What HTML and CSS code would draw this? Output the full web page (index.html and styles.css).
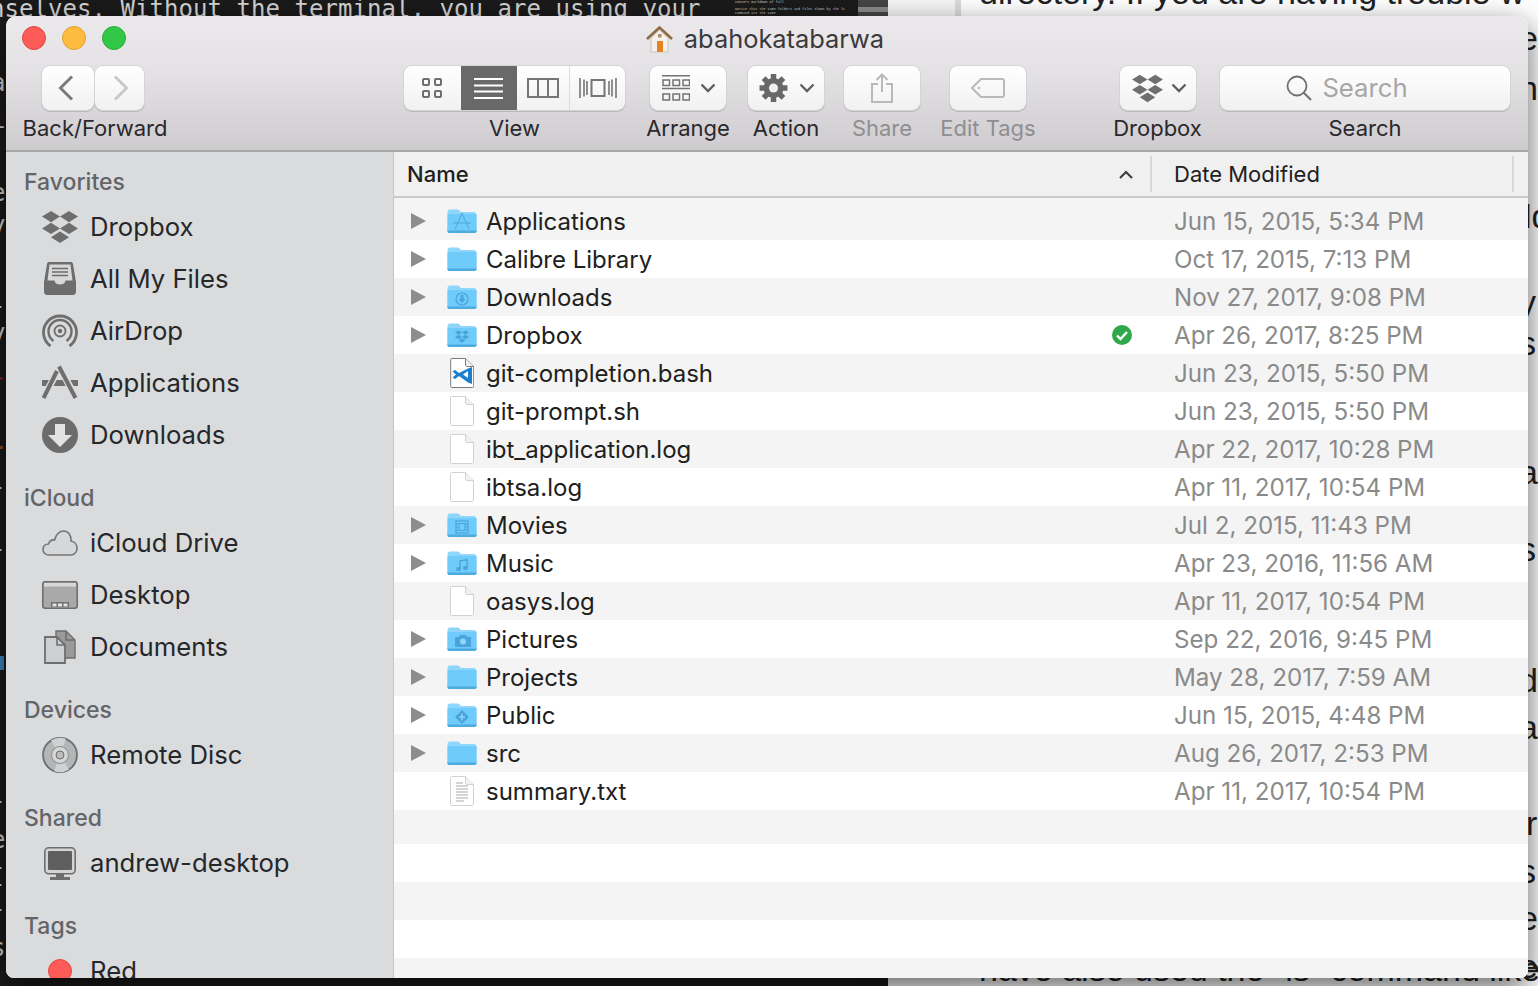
FILE: index.html
```html
<!DOCTYPE html>
<html lang="en">
<head>
<meta charset="utf-8">
<title>abahokatabarwa</title>
<link rel="stylesheet" href="styles.css">
</head>
<body>
<svg class="defs" width="0" height="0" aria-hidden="true">
  <defs>
    <symbol id="dbx" viewBox="0 0 36 32">
      <path d="M9 0l9 5.6-9 5.6-9-5.6zM27 0l9 5.6-9 5.6-9-5.6zM9 11.8l9 5.6-9 5.6-9-5.6zM27 11.8l9 5.6-9 5.6-9-5.6zM18 20.6l9 5.7-9 5.7-9-5.7z"/>
    </symbol>
    <symbol id="folder" viewBox="1 0 29 24">
      <path d="M1 3.5C1 1.5 2 .5 3.5.5h7c1.500 0 2 .5 3 1.500l1 1h12.500C29 3 30 4 30 5.500V22c0 1.200-.8 2-2 2H3c-1.200 0-2-.8-2-2z" fill="#8ed6fb"/>
      <path d="M1 6.500C1 5.500 1.500 5 2.500 5h26c1 0 1.500.5 1.500 1.500V22c0 1.200-.8 2-2 2H3c-1.200 0-2-.8-2-2z" fill="#6fcbf9"/>
      <path d="M1 21.500h29V22c0 1.200-.8 2-2 2H3c-1.200 0-2-.8-2-2z" fill="#4fabdf"/>
    </symbol>
    <symbol id="doc" viewBox="0 0 24 30">
      <path d="M.5 1.500c0-.6.4-1 1-1h14l8 8v20c0 .6-.4 1-1 1h-21c-.6 0-1-.4-1-1z" fill="#fff" stroke="#d2d2d2"/>
      <path d="M15.500.5v6.500c0 .8.6 1.500 1.500 1.500h6.500" fill="#f1f1f1" stroke="#d2d2d2"/>
    </symbol>
    <symbol id="tri" viewBox="0 0 15 16">
      <path d="M0 0l15 8-15 8z"/>
    </symbol>
    <symbol id="chev" viewBox="0 0 16 10">
      <path d="M1.500 1.500L8 8l6.500-6.500" fill="none" stroke="#5f5f5f" stroke-width="2.400"/>
    </symbol>
  </defs>
</svg>

<div class="desktop">
  <div class="pane-term"></div>
  <div class="pane-thumb">
    <p class="thumb-text">Convert markdown of full</p>
    <p class="thumb-text thumb-second">Notice that the same folders and files shown by the ls<br>command are the same</p>
  </div>
  <div class="pane-scroll"><span class="scroll-thumb"></span></div>
  <div class="pane-article"></div>
  <div class="pane-white"></div>
  <div class="pane-rule"></div>
  <span class="term-line">nselves. Without the terminal, you are using your</span>
  <span class="article-line article-top">directory. If you are having trouble w</span>
  <span class="article-line article-bottom">have also used the `ls` command like</span>
  <span class="edge edge-r er-1">e</span>
  <span class="edge edge-r er-2">h</span>
  <span class="edge edge-r er-3">ld</span>
  <span class="edge edge-r er-4">y</span>
  <span class="edge edge-r er-5">s</span>
  <span class="edge edge-r er-6">a</span>
  <span class="edge edge-r er-7">s</span>
  <span class="edge edge-r er-8">d</span>
  <span class="edge edge-r er-9">a</span>
  <span class="edge edge-r er-10">r</span>
  <span class="edge edge-r er-11">s</span>
  <span class="edge edge-r er-12">e</span>
  <span class="edge edge-r er-13">e</span>
  <span class="edge edge-l el-1">a</span>
  <span class="edge edge-l el-2">i</span>
  <span class="edge edge-l el-3">e</span>
  <span class="edge edge-l el-4">y</span>
  <span class="edge edge-l el-5">-</span>
  <span class="edge edge-l el-6">y</span>
  <span class="edge edge-l el-7">-</span>
  <span class="edge edge-l el-8">-</span>
  <span class="edge edge-l el-9">-</span>
  <span class="edge edge-l el-10">e</span>
  <span class="edge edge-l el-11">-</span>
  <span class="edge edge-l el-12">-</span>
  <span class="edge edge-l el-13">-</span>
  <span class="edge edge-l el-14">s</span>
  <span class="edge-mark"></span>
  <span class="edge-tick tick-red"></span>
  <span class="edge-tick tick-orange"></span>

  <main class="window">
    <header class="chrome">
      <div class="titlebar">
        <div class="lights">
          <span class="light light-red"></span>
          <span class="light light-yellow"></span>
          <span class="light light-green"></span>
        </div>
        <svg class="home" width="27" height="27" viewBox="0 0 27 27">
          <path d="M5 12v14h17V12L13.500 4z" fill="#f3f1ee" stroke="#c9c5c0"/>
          <path d="M1 13L13.500 1.500 26 13" fill="none" stroke="#8f6a44" stroke-width="2.600"/>
          <rect x="11" y="15" width="6" height="11" fill="#e8821e"/>
          <rect x="12" y="8" width="3.500" height="3.500" fill="#b08a60"/>
        </svg>
        <span class="title">abahokatabarwa</span>
      </div>
      <div class="toolbar">
        <div class="tool tool-back">
          <div class="pair">
            <button class="btn btn-prev"><svg width="16" height="26" viewBox="0 0 16 26"><path d="M14 1.500L2.500 13 14 24.500" fill="none" stroke="#7b7b7b" stroke-width="3"/></svg></button>
            <button class="btn btn-next"><svg width="16" height="26" viewBox="0 0 16 26"><path d="M2 1.500L13.500 13 2 24.500" fill="none" stroke="#c9c9c9" stroke-width="3"/></svg></button>
          </div>
          <span class="tool-label">Back/Forward</span>
        </div>
        <div class="tool tool-view">
          <div class="segs btn">
            <span class="seg seg-icons"><svg width="20" height="20" viewBox="0 0 20 20"><g fill="none" stroke="#6f6f6f" stroke-width="2"><rect x="1" y="1" width="6" height="6" rx="1"/><rect x="13" y="1" width="6" height="6" rx="1"/><rect x="1" y="13" width="6" height="6" rx="1"/><rect x="13" y="13" width="6" height="6" rx="1"/></g></svg></span>
            <span class="seg seg-list"><svg width="29" height="21" viewBox="0 0 29 21"><path d="M0 1h29M0 7.500h29M0 13.500h29M0 20h29" stroke="#fff" stroke-width="2"/></svg></span>
            <span class="seg seg-cols"><svg width="32" height="20" viewBox="0 0 32 20"><path d="M1 1h30v18H1zM11 1v18M21 1v18" fill="none" stroke="#757575" stroke-width="2"/></svg></span>
            <span class="seg seg-flow"><svg width="38" height="22" viewBox="0 0 38 22"><path d="M1 1v20M5 2.500v17M8 4v14M30 4v14M33 2.500v17M37 1v20" stroke="#757575" stroke-width="1.600"/><rect x="12.500" y="3" width="13" height="16" fill="none" stroke="#757575" stroke-width="2"/></svg></span>
          </div>
          <span class="tool-label">View</span>
        </div>
        <div class="tool tool-arrange">
          <button class="btn btn-menu">
            <svg width="28" height="26" viewBox="0 0 28 26"><g fill="none" stroke="#737373" stroke-width="1.500"><path d="M0 .8h28M0 13.500h28" /><rect x="1" y="5" width="6.500" height="5.500"/><rect x="11" y="5" width="6.500" height="5.500"/><rect x="21" y="5" width="6.500" height="5.500"/><rect x="1" y="19" width="6.500" height="6"/><rect x="11" y="19" width="6.500" height="6"/><rect x="21" y="19" width="6.500" height="6"/></g></svg>
            <svg class="chev" width="16" height="10"><use href="#chev"/></svg>
          </button>
          <span class="tool-label">Arrange</span>
        </div>
        <div class="tool tool-action">
          <button class="btn btn-menu">
            <svg width="29" height="28" viewBox="0 0 29 28"><g fill="#686868"><circle cx="14.500" cy="14" r="10"/><g stroke="#686868" stroke-width="5.500"><path d="M14.500 0v28M.5 14h28M4.600 4.100l19.800 19.800M24.400 4.100L4.600 23.900"/></g></g><circle cx="14.500" cy="14" r="4.500" fill="#f0f0f0"/></svg>
            <svg class="chev" width="16" height="10"><use href="#chev"/></svg>
          </button>
          <span class="tool-label">Action</span>
        </div>
        <div class="tool tool-share">
          <button class="btn"><svg width="22" height="30" viewBox="0 0 22 30"><path d="M7 11H1v18h20V11h-6M11 19V1.500M5.500 7L11 1.500 16.500 7" fill="none" stroke="#b9b9b9" stroke-width="2"/></svg></button>
          <span class="tool-label tool-label-off">Share</span>
        </div>
        <div class="tool tool-tags">
          <button class="btn"><svg width="34" height="20" viewBox="0 0 34 20"><path d="M10 1h21c1.200 0 2 .8 2 2v14c0 1.200-.8 2-2 2H10L1 10z" fill="none" stroke="#b9b9b9" stroke-width="2"/><circle cx="8" cy="10" r="1.300" fill="#b9b9b9"/></svg></button>
          <span class="tool-label tool-label-off">Edit Tags</span>
        </div>
        <div class="tool tool-dropbox">
          <button class="btn btn-menu btn-dbx">
            <svg class="dbx-tool" width="31" height="29"><use href="#dbx"/></svg>
            <svg class="chev" width="16" height="10"><use href="#chev"/></svg>
          </button>
          <span class="tool-label">Dropbox</span>
        </div>
        <div class="tool tool-search">
          <div class="search btn">
            <svg width="26" height="26" viewBox="0 0 26 26"><circle cx="11" cy="11" r="9.500" fill="none" stroke="#707070" stroke-width="1.800"/><path d="M17.500 17.500L25 25" stroke="#707070" stroke-width="2"/></svg>
            <span class="search-text">Search</span>
          </div>
          <span class="tool-label">Search</span>
        </div>
      </div>
    </header>

    <div class="body">
      <aside class="sidebar">
        <section class="side-section">
          <h2 class="side-head">Favorites</h2>
          <div class="side-row"><svg class="si" width="36" height="32"><use href="#dbx"/></svg><span>Dropbox</span></div>
          <div class="side-row"><svg class="si" width="36" height="36" viewBox="0 0 36 36"><path d="M5 3c0-1 .8-2 2-2h22c1.200 0 2 1 2 2l3 18v10c0 2-1.500 3-3 3H5c-1.500 0-3-1-3-3V21z" fill="#6d6d6d"/><path d="M7.500 3.500h21l2 16h-7c-.5 3-3 4-5.500 4s-5-1-5.500-4h-7z" fill="#d6d7d8"/><path d="M10 7.500h16M10 11h16M10 14.500h16" stroke="#6d6d6d" stroke-width="1.400"/></svg><span>All My Files</span></div>
          <div class="side-row"><svg class="si" width="36" height="36" viewBox="0 0 36 36"><g fill="none" stroke="#6e6e6e"><path d="M8.500 33a16.500 16.500 0 1 1 19 0" stroke-width="2.800"/><path d="M11.500 28a11.500 11.500 0 1 1 13 0" stroke-width="2.400"/><circle cx="18" cy="18" r="5.500" stroke-width="1.800"/></g><circle cx="18" cy="18" r="2.200" fill="#6e6e6e"/></svg><span>AirDrop</span></div>
          <div class="side-row"><svg class="si" width="36" height="36" viewBox="0 0 36 36"><rect x="0" y="15" width="36" height="6" fill="#6e6e6e"/><path d="M17 1L34 33" stroke="#d9dadc" stroke-width="7"/><path d="M15 7L1.500 33" stroke="#d9dadc" stroke-width="7"/><path d="M17 1.500L33.500 33" stroke="#6e6e6e" stroke-width="4"/><path d="M15 6L1.500 33" stroke="#6e6e6e" stroke-width="4"/></svg><span>Applications</span></div>
          <div class="side-row"><svg class="si" width="36" height="36" viewBox="0 0 36 36"><circle cx="18" cy="18" r="18" fill="#6c6c6c"/><path d="M13 7h10v11h7L18 30 6 18h7z" fill="#e2e3e4"/></svg><span>Downloads</span></div>
        </section>
        <section class="side-section">
          <h2 class="side-head">iCloud</h2>
          <div class="side-row"><svg class="si" width="36" height="26" viewBox="0 0 36 26"><path d="M7 25C3 25 1 22 1 19.500 1 16 3.500 14 6.500 14 7.500 11 10 9.500 12.500 10 14 4 18 1 21.500 1 26 1 29.500 5 29 11c3.500.5 6 3.500 6 7.500 0 3.500-2.500 6.500-6 6.500z" fill="#d6d7d9" stroke="#757575" stroke-width="1.600"/></svg><span>iCloud Drive</span></div>
          <div class="side-row"><svg class="si" width="36" height="28" viewBox="0 0 36 28"><rect x=".8" y=".8" width="34.400" height="26.400" rx="2.500" fill="#a9a9a9" stroke="#6e6e6e" stroke-width="1.600"/><rect x="2" y="2" width="32" height="3.500" fill="#d7d8d9"/><path d="M9 21h18v5H9z" fill="#6e6e6e"/><path d="M10.500 22.500h4v3h-4zM16 22.500h4v3h-4zM21.500 22.500h4v3h-4z" fill="#e4e4e4"/></svg><span>Desktop</span></div>
          <div class="side-row"><svg class="si si-narrow" width="32" height="34" viewBox="0 0 32 34"><path d="M12 1h10l9 9v18H20V14l-8-5z" fill="#9a9a9a" stroke="#6e6e6e" stroke-width="1.400"/><path d="M1 7h12l8 8v18H1z" fill="#cdd0d2" stroke="#6e6e6e" stroke-width="1.800"/><path d="M13 7v8h8M22 1v9h9" fill="none" stroke="#6e6e6e" stroke-width="1.600"/></svg><span>Documents</span></div>
        </section>
        <section class="side-section">
          <h2 class="side-head">Devices</h2>
          <div class="side-row"><svg class="si" width="36" height="36" viewBox="0 0 36 36"><circle cx="18" cy="18" r="17" fill="#b4b5b6" stroke="#6e6e6e" stroke-width="1.800"/><path d="M18 18L9 3.500A17 17 0 0 1 24 2zM18 18L27 32.500A17 17 0 0 1 12 34z" fill="#d0d1d2"/><circle cx="18" cy="18" r="8.500" fill="#d5d6d7" stroke="#8a8a8a"/><circle cx="18" cy="18" r="4" fill="#bcbdbe" stroke="#6e6e6e"/></svg><span>Remote Disc</span></div>
        </section>
        <section class="side-section">
          <h2 class="side-head">Shared</h2>
          <div class="side-row"><svg class="si si-narrow" width="32" height="33" viewBox="0 0 32 33"><rect x=".8" y=".8" width="30.400" height="26" rx="4" fill="#d3d4d6" stroke="#6e6e6e" stroke-width="1.600"/><rect x="4" y="4" width="24" height="19" rx="1" fill="#5f5f5f"/><path d="M12 27h8v3h6v3H6v-3h6z" fill="#6e6e6e"/></svg><span>andrew-desktop</span></div>
        </section>
        <section class="side-section">
          <h2 class="side-head">Tags</h2>
          <div class="side-row"><span class="tag-dot"></span><span>Red</span></div>
        </section>
      </aside>

      <section class="files">
        <div class="col-head">
          <span class="col-name">Name</span>
          <svg class="sort" width="14" height="9" viewBox="0 0 14 9"><path d="M1 8l6-6 6 6" fill="none" stroke="#3f3f3f" stroke-width="2.200"/></svg>
          <span class="col-date">Date Modified</span>
        </div>
        <div class="list">
          <div class="row"><svg class="tri" width="15" height="16"><use href="#tri"/></svg>
            <span class="ico"><svg width="30" height="24"><use href="#folder"/></svg><svg class="badge badge-big" width="20" height="18" viewBox="0 0 20 18"><path d="M10 1L3 17M10 1l7 16M1 11h18" fill="none" stroke="#4fa8e0" stroke-width="1"/></svg></span>
            <span class="name">Applications</span><span></span><span class="date">Jun 15, 2015, 5:34 PM</span></div>
          <div class="row"><svg class="tri" width="15" height="16"><use href="#tri"/></svg>
            <span class="ico"><svg width="30" height="24"><use href="#folder"/></svg></span>
            <span class="name">Calibre Library</span><span></span><span class="date">Oct 17, 2015, 7:13 PM</span></div>
          <div class="row"><svg class="tri" width="15" height="16"><use href="#tri"/></svg>
            <span class="ico"><svg width="30" height="24"><use href="#folder"/></svg><svg class="badge" width="14" height="14" viewBox="0 0 14 14"><circle cx="7" cy="7" r="6" fill="none" stroke="#4aa3dc" stroke-width="1.200"/><path d="M5.500 3h3v4h2L7 11 3.500 7h2z" fill="#4aa3dc"/></svg></span>
            <span class="name">Downloads</span><span></span><span class="date">Nov 27, 2017, 9:08 PM</span></div>
          <div class="row"><svg class="tri" width="15" height="16"><use href="#tri"/></svg>
            <span class="ico"><svg width="30" height="24"><use href="#folder"/></svg><svg class="badge badge-dbx" width="14" height="13"><use href="#dbx"/></svg></span>
            <span class="name">Dropbox</span>
            <svg class="synced" width="20" height="20" viewBox="0 0 20 20"><circle cx="10" cy="10" r="10" fill="#2fa84a"/><path d="M5 10.500l3.500 3.500L15 7" fill="none" stroke="#fff" stroke-width="2.400"/></svg>
            <span class="date">Apr 26, 2017, 8:25 PM</span></div>
          <div class="row"><span class="ico ico-2"><svg width="24" height="30" viewBox="0 0 24 30"><path d="M.7 1.500c0-.6.4-1 1-1h14l8 8v20c0 .6-.4 1-1 1h-21c-.6 0-1-.4-1-1z" fill="#fff" stroke="#7c7c7c"/><path d="M15.500.5v6.500c0 .8.6 1.500 1.500 1.500h6.500" fill="#eee" stroke="#7c7c7c"/><path d="M18 10.500l4-1.500v17l-4-1.500L9 18l-4 3-2.500-1.500L6 16.500 2.500 13.500 5 12l4 3z" fill="#1a7fce"/><path d="M18 13l-5 3.500 5 3.500z" fill="#fff"/></svg></span>
            <span class="name">git-completion.bash</span><span></span><span class="date">Jun 23, 2015, 5:50 PM</span></div>
          <div class="row"><span class="ico ico-2"><svg width="24" height="30"><use href="#doc"/></svg></span>
            <span class="name">git-prompt.sh</span><span></span><span class="date">Jun 23, 2015, 5:50 PM</span></div>
          <div class="row"><span class="ico ico-2"><svg width="24" height="30"><use href="#doc"/></svg></span>
            <span class="name">ibt_application.log</span><span></span><span class="date">Apr 22, 2017, 10:28 PM</span></div>
          <div class="row"><span class="ico ico-2"><svg width="24" height="30"><use href="#doc"/></svg></span>
            <span class="name">ibtsa.log</span><span></span><span class="date">Apr 11, 2017, 10:54 PM</span></div>
          <div class="row"><svg class="tri" width="15" height="16"><use href="#tri"/></svg>
            <span class="ico"><svg width="30" height="24"><use href="#folder"/></svg><svg class="badge" width="14" height="14" viewBox="0 0 14 14"><rect x="1" y="1" width="12" height="12" fill="none" stroke="#4aa3dc" stroke-width="1.200"/><rect x="4" y="3.500" width="6" height="7" fill="none" stroke="#4aa3dc"/><path d="M1 4h3M1 7h3M1 10h3M10 4h3M10 7h3M10 10h3" stroke="#4aa3dc"/></svg></span>
            <span class="name">Movies</span><span></span><span class="date">Jul 2, 2015, 11:43 PM</span></div>
          <div class="row"><svg class="tri" width="15" height="16"><use href="#tri"/></svg>
            <span class="ico"><svg width="30" height="24"><use href="#folder"/></svg><svg class="badge" width="14" height="14" viewBox="0 0 14 14"><path d="M5 11V3l7-1.500V10" fill="none" stroke="#4aa3dc" stroke-width="1.400"/><ellipse cx="3.500" cy="11" rx="2.500" ry="2" fill="#4aa3dc"/><ellipse cx="10.500" cy="10" rx="2.500" ry="2" fill="#4aa3dc"/></svg></span>
            <span class="name">Music</span><span></span><span class="date">Apr 23, 2016, 11:56 AM</span></div>
          <div class="row"><span class="ico ico-2"><svg width="24" height="30"><use href="#doc"/></svg></span>
            <span class="name">oasys.log</span><span></span><span class="date">Apr 11, 2017, 10:54 PM</span></div>
          <div class="row"><svg class="tri" width="15" height="16"><use href="#tri"/></svg>
            <span class="ico"><svg width="30" height="24"><use href="#folder"/></svg><svg class="badge" width="16" height="13" viewBox="0 0 16 13"><path d="M0 3h4l1-2h6l1 2h4v10H0z" fill="#4aa3dc"/><circle cx="8" cy="7.500" r="3" fill="#8ed6fb"/></svg></span>
            <span class="name">Pictures</span><span></span><span class="date">Sep 22, 2016, 9:45 PM</span></div>
          <div class="row"><svg class="tri" width="15" height="16"><use href="#tri"/></svg>
            <span class="ico"><svg width="30" height="24"><use href="#folder"/></svg></span>
            <span class="name">Projects</span><span></span><span class="date">May 28, 2017, 7:59 AM</span></div>
          <div class="row"><svg class="tri" width="15" height="16"><use href="#tri"/></svg>
            <span class="ico"><svg width="30" height="24"><use href="#folder"/></svg><svg class="badge" width="14" height="14" viewBox="0 0 14 14"><path d="M7 0l7 7-7 7-7-7z" fill="#4aa3dc"/><path d="M7 3.500v7M4 7h6" stroke="#8ed6fb" stroke-width="1.400"/></svg></span>
            <span class="name">Public</span><span></span><span class="date">Jun 15, 2015, 4:48 PM</span></div>
          <div class="row"><svg class="tri" width="15" height="16"><use href="#tri"/></svg>
            <span class="ico"><svg width="30" height="24"><use href="#folder"/></svg></span>
            <span class="name">src</span><span></span><span class="date">Aug 26, 2017, 2:53 PM</span></div>
          <div class="row"><span class="ico ico-2"><svg width="24" height="30"><use href="#doc"/></svg><svg class="badge badge-text" width="14" height="20" viewBox="0 0 14 20"><path d="M1 1h7M1 4h12M1 7h12M1 10h12M1 13h12M1 16h12M1 19h8" stroke="#a9a9a9" stroke-width="1"/></svg></span>
            <span class="name">summary.txt</span><span></span><span class="date">Apr 11, 2017, 10:54 PM</span></div>
          <div class="filler filler-a"></div>
          <div class="filler filler-b"></div>
          <div class="filler filler-c"></div>
          <div class="filler filler-b"></div>
        </div>
      </section>
    </div>
  </main>
</div>
</body>
</html>
```

FILE: styles.css
```css
* { box-sizing: border-box; }
html, body { margin: 0; padding: 0; height: 100%; overflow: hidden; background: #181818; }
.defs { position: absolute; }
.desktop { position: relative; width: 1538px; height: 986px; overflow: hidden; background: #181818; font-family: Inter, "Noto Sans", "Liberation Sans", sans-serif; }
.pane-term { position: absolute; left: 0; top: 0; width: 858px; height: 986px; background: #1a1a1a; }
.pane-thumb { position: absolute; left: 733px; top: 0; width: 125px; height: 16px; background: #1b1b1b; color: #c9c9c9; overflow: hidden; }
.thumb-text { margin: 0 0 0 2px; white-space: nowrap; font: 3.400px/4px "Liberation Mono", monospace; }
.thumb-second { margin-top: 3px; }
.pane-scroll { position: absolute; left: 858px; top: 0; width: 30px; height: 16px; background: #454545; display: flex; align-items: flex-start; padding-top: 7px; }
.scroll-thumb { display: block; width: 100%; height: 5px; background: #8b8b8b; }
.pane-article { position: absolute; left: 888px; top: 0; width: 650px; height: 986px; background: #f6f6f6; }
.pane-white { position: absolute; left: 960px; top: 0; width: 578px; height: 986px; background: #fff; }
.pane-rule { position: absolute; left: 955px; top: 0; width: 6px; height: 16px; background: #dcdcdc; }
.term-line { position: absolute; left: -10px; top: -6px; font: 24px/30px "DejaVu Sans Mono", monospace; letter-spacing: .05px; color: #d4d4d4; white-space: pre; }
.article-line { position: absolute; left: 979px; color: #222; font: 34px/34px "Liberation Sans", sans-serif; white-space: nowrap; }
.article-top { top: -25px; }
.article-bottom { top: 952px; }
.edge { position: absolute; font: 34px/34px "Liberation Sans", sans-serif; color: #222; }
.edge-r { left: 1519px; }
.er-1 { top: 21px; }
.er-2 { top: 71px; }
.er-3 { top: 199px; left: 1524px; }
.er-4 { top: 285px; }
.er-5 { top: 326px; }
.er-6 { top: 455px; }
.er-7 { top: 532px; }
.er-8 { top: 663px; }
.er-9 { top: 710px; }
.er-10 { top: 806px; left: 1526px; }
.er-11 { top: 854px; }
.er-12 { top: 901px; }
.er-13 { top: 949px; }
.edge-l { left: -9px; font: 24px/30px "DejaVu Sans Mono", monospace; color: #d4d4d4; }
.el-1 { top: 68px; }
.el-2 { top: 105px; }
.el-3 { top: 178px; }
.el-4 { top: 210px; }
.el-5 { top: 291px; }
.el-6 { top: 318px; }
.el-7 { top: 472px; }
.el-8 { top: 534px; }
.el-9 { top: 786px; }
.el-10 { top: 825px; }
.el-11 { top: 852px; }
.el-12 { top: 869px; }
.el-13 { top: 894px; }
.el-14 { top: 933px; }
.edge-mark { position: absolute; left: 0; top: 656px; width: 4px; height: 14px; background: #3d85c0; }
.edge-tick { position: absolute; left: 0; width: 3px; height: 3px; }
.tick-red { top: 377px; background: #6e1f1f; }
.tick-orange { top: 446px; background: #8a4a1a; }

.window { position: absolute; left: 6px; top: 16px; width: 1522px; height: 962px; border-radius: 10px 10px 8px 8px; overflow: hidden; box-shadow: 0 10px 30px rgba(0,0,0,.6); display: flex; flex-direction: column; background: #fff; }
.chrome { height: 136px; flex: none; background: linear-gradient(#ebe9ec, #e4e2e5 40%, #cecccf); border-bottom: 2px solid #a8a7a8; }
.titlebar { height: 50px; position: relative; display: flex; align-items: center; justify-content: center; gap: 11px; padding-bottom: 4px; padding-right: 4px; }
.lights { position: absolute; left: 16px; top: 10px; display: flex; gap: 16px; }
.light { width: 24px; height: 24px; border-radius: 50%; border: 1px solid; }
.light-red { background: #fc5b57; border-color: #e2463f; }
.light-yellow { background: #fdbc40; border-color: #e1a02f; }
.light-green { background: #33c748; border-color: #2aac38; }
.title { font-size: 25.400px; color: #3b393c; line-height: 30px; }

.toolbar { display: flex; align-items: flex-start; padding-left: 17px; height: 84px; }
.tool { display: flex; flex-direction: column; align-items: center; flex: none; }
.tool-label { font-size: 22px; line-height: 30px; margin-top: 3px; color: #2a282b; white-space: nowrap; }
.tool-label-off { color: #8f8e90; }
.tool-back { width: 144px; }
.tool-view { width: 221px; margin-left: 237px; }
.tool-arrange { width: 82px; margin-left: 22px; }
.tool-action { width: 76px; margin-left: 19px; }
.tool-share { width: 76px; margin-left: 20px; }
.tool-tags { width: 96px; margin-left: 20px; }
.tool-dropbox { width: 87px; margin-left: 78px; }
.tool-search { width: 290px; margin-left: 19px; }

.btn { height: 44px; background: linear-gradient(#fff, #f1f1f1); border: 0; border-radius: 8px; box-shadow: 0 0 0 1px #d4d3d5, 0 1px 0 1px #b9b8ba; padding: 0; display: flex; align-items: center; justify-content: center; width: 76px; flex: none; }
.pair { display: flex; gap: 1px; align-self: flex-start; margin-left: 19px; }
.btn-prev { width: 52px; padding-right: 4px; }
.btn-next { width: 49px; padding-left: 2px; }
.btn-menu { justify-content: flex-start; padding-left: 12px; gap: 10px; }
.tool-action .btn-menu { padding-left: 11px; gap: 11px; }
.btn-dbx { width: 76px; gap: 8px; }
.dbx-tool { fill: #6f6f6f; flex: none; }
.segs { width: 221px; overflow: hidden; justify-content: flex-start; }
.seg { height: 44px; display: flex; align-items: center; justify-content: center; }
.seg-icons { width: 57px; padding-right: 2px; }
.seg-list { width: 56px; background: #696969; padding-right: 2px; }
.seg-cols { width: 53px; border-right: 1px solid #dcdcdc; padding-right: 1px; }
.seg-flow { width: 55px; }
.search { width: 290px; gap: 10px; padding-right: 36px; }
.search-text { font-size: 25.700px; color: #a6a6a6; line-height: 30px; }

.body { flex: 1; display: flex; min-height: 0; }
.sidebar { width: 388px; flex: none; background: #d9dbdd; border-right: 1px solid #c6c6c6; padding: 11px 0 0; overflow: hidden; }
.side-section { margin-bottom: 18px; }
.side-head { margin: 0; height: 38px; line-height: 38px; padding-left: 18px; font-size: 23px; font-weight: 500; color: #636467; }
.side-row { height: 52px; display: flex; align-items: center; padding-left: 36px; font-size: 25.700px; color: #26272a; gap: 12px; white-space: nowrap; }
.side-row > span:not(.tag-dot) { margin-top: -2px; }
.si { width: 36px; fill: #6e6e6e; flex: none; }
.si-narrow { padding: 0 2px; }
.tag-dot { width: 24px; height: 24px; margin: 0 6px; border-radius: 50%; background: #fc5b57; border: 1px solid #e2463f; flex: none; }

.files { flex: 1; min-width: 0; background: #fff; display: flex; flex-direction: column; }
.col-head { height: 46px; flex: none; background: #f0f0f0; border-bottom: 2px solid #c9c9c9; display: flex; align-items: center; font-size: 22px; font-weight: 500; color: #202020; }
.col-name { padding-left: 13px; width: 725px; }
.sort { flex: none; }
.col-date { margin-left: 17px; padding-left: 22px; font-weight: 400; height: 36px; line-height: 36px; width: 364px; border-left: 2px solid #d8d8d8; border-right: 2px solid #d8d8d8; }
.list { flex: 1; background: #f4f4f4; padding-top: 4px; min-height: 0; }
.row { height: 38px; display: grid; grid-template-columns: 53px 39px 626px 62px 1fr; align-items: center; font-size: 24px; color: #202020; }
.row:nth-child(even) { background: #fff; }
.tri { grid-column: 1; margin-left: 17px; fill: #8d8d8d; }
.ico { grid-column: 2; position: relative; display: flex; align-items: center; justify-content: center; width: 30px; height: 30px; }
.badge { position: absolute; left: 8px; top: 10px; }
.badge-big { left: 5px; top: 6px; }
.badge-dbx { fill: #4aa3dc; }
.badge-text { left: 8px; top: 6px; }
.name { grid-column: 3; white-space: nowrap; }
.synced { grid-column: 4; }
.date { grid-column: 5; color: #8a8a8a; white-space: nowrap; font-size: 24.150px; }
.filler-a { height: 34px; }
.filler-b { height: 38px; background: #fff; }
.filler-c { height: 38px; }
```
